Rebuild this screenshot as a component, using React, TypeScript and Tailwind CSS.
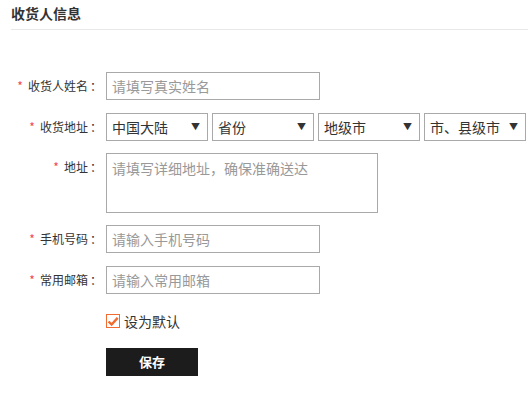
import { useState } from "react";

const font = { fontFamily: '"Microsoft YaHei", "Noto Sans CJK SC", "Liberation Sans", sans-serif' };

function Label({ text }: { text: string }) {
  return (
    <div className="flex h-[28px] w-[91px] shrink-0 items-center justify-end text-[12px] text-[#333]">
      <span className="mr-[5px] text-[12px] text-[#ef4a4a]">*</span>
      <span>{text}</span>
      <span className="ml-[2px]">：</span>
    </div>
  );
}

function Select({ value }: { value: string }) {
  return (
    <div className="relative h-[28px] w-[102px] border border-[#a9a9a9] bg-white">
      <div className="flex h-full items-center pl-[5px] text-[14px] text-[#333]">{value}</div>
      <span className="pointer-events-none absolute right-[7px] top-[8px] text-[9px] leading-[10px] text-[#333]">
        ▼
      </span>
    </div>
  );
}

export default function App() {
  const [isDefault, setIsDefault] = useState(true);

  return (
    <div className="h-[394px] w-[528px] bg-white pl-[11px]" style={font}>
      <h3 className="pt-[5px] text-[14px] font-bold leading-[16px] text-[#333]">收货人信息</h3>
      <div className="mt-[8px] border-b border-[#e8e8e8]" />

      <div className="mt-[42px] flex flex-col">
        <div className="flex">
          <Label text="收货人姓名" />
          <input
            className="ml-[4px] h-[28px] w-[214px] border border-[#a9a9a9] px-[5px] text-[14px] outline-none placeholder:text-[#999]"
            placeholder="请填写真实姓名"
          />
        </div>

        <div className="mt-[13px] flex">
          <Label text="收货地址" />
          <div className="ml-[4px] flex gap-[4px]">
            <Select value="中国大陆" />
            <Select value="省份" />
            <Select value="地级市" />
            <Select value="市、县级市" />
          </div>
        </div>

        <div className="mt-[12px] flex">
          <Label text="地址" />
          <textarea
            className="ml-[4px] h-[60px] w-[272px] resize-none border border-[#a9a9a9] px-[5px] py-[4px] text-[14px] leading-[20px] outline-none placeholder:text-[#999]"
            placeholder="请填写详细地址，确保准确送达"
          />
        </div>

        <div className="mt-[12px] flex">
          <Label text="手机号码" />
          <input
            className="ml-[4px] h-[28px] w-[214px] border border-[#a9a9a9] px-[5px] text-[14px] outline-none placeholder:text-[#999]"
            placeholder="请输入手机号码"
          />
        </div>

        <div className="mt-[13px] flex">
          <Label text="常用邮箱" />
          <input
            className="ml-[4px] h-[28px] w-[214px] border border-[#a9a9a9] px-[5px] text-[14px] outline-none placeholder:text-[#999]"
            placeholder="请输入常用邮箱"
          />
        </div>

        <label
          className="mt-[17px] ml-[95px] flex h-[20px] cursor-pointer items-center"
          onClick={() => setIsDefault(!isDefault)}
        >
          <span className="flex h-[14px] w-[14px] items-center justify-center border border-[#f26b30] bg-white">
            {isDefault && (
              <svg viewBox="0 0 14 14" className="h-[13px] w-[13px]">
                <path d="M1.8 7 L5.4 10.6 L12.4 2.8" fill="none" stroke="#f26b30" strokeWidth={2.8} />
              </svg>
            )}
          </span>
          <span className="ml-[4px] text-[14px] text-[#333]">设为默认</span>
        </label>

        <button className="mt-[17px] ml-[95px] h-[28px] w-[92px] bg-[#1c1c1c] text-[13px] font-bold text-white">
          保存
        </button>
      </div>
    </div>
  );
}
